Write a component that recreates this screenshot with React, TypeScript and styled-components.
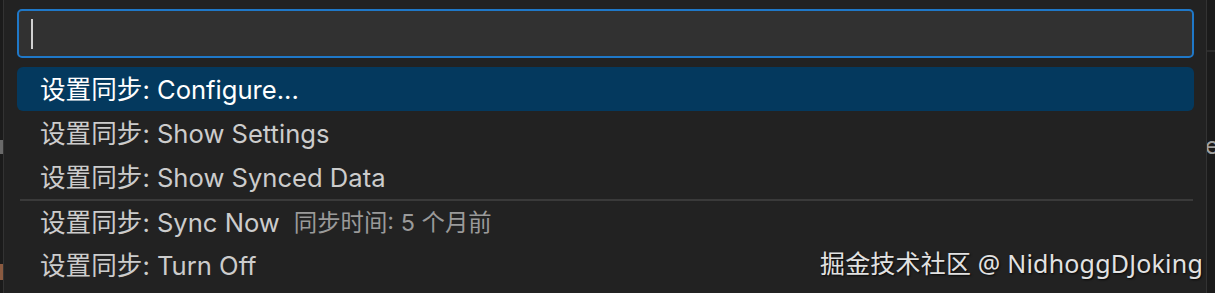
import React from 'react';
import styled, { createGlobalStyle } from 'styled-components';

const GlobalStyle = createGlobalStyle`
  html, body {
    margin: 0;
    padding: 0;
    background: #181818;
    overflow: hidden;
  }
  body {
    font-family: Inter, "Noto Sans CJK SC", sans-serif;
  }
`;

interface PickItem {
  label: string;
  description?: string;
  separator?: boolean;
}

const items: PickItem[] = [
  { label: '设置同步: Configure...' },
  { label: '设置同步: Show Settings' },
  { label: '设置同步: Show Synced Data' },
  { label: '设置同步: Sync Now', description: '同步时间: 5 个月前', separator: true },
  { label: '设置同步: Turn Off' },
];

const Screen = styled.div`
  position: relative;
  display: flex;
  width: 1215px;
  height: 293px;
  overflow: hidden;
  background: #181818;
`;

const EdgeStrip = styled.div<{ $w: number }>`
  width: ${(p) => p.$w}px;
  flex-shrink: 0;
  display: flex;
  flex-direction: column;
  overflow: hidden;
  background: #1b1b1b;
`;

const ScrollMark = styled.div`
  margin-top: 140px;
  width: 3px;
  height: 14px;
  background: #6a6a6a;
`;

const OrangeMark = styled.div`
  margin-top: 110px;
  width: 3px;
  height: 16px;
  background: #8a5a40;
`;

const RightLine = styled.div`
  margin-top: 50px;
  height: 2px;
  background: #2c2c2c;
`;

const PeekChar = styled.div`
  margin-top: 84px;
  margin-left: -2px;
  font-size: 24px;
  line-height: 20px;
  color: #a0a0a0;
`;

const Panel = styled.div`
  flex: 1;
  display: flex;
  flex-direction: column;
  gap: 9px;
  padding: 9px 12px 0 13px;
  background: #222222;
  border-left: 1px solid #333333;
  border-right: 1px solid #333333;
`;

const InputBox = styled.div`
  height: 45px;
  display: flex;
  align-items: center;
  padding-left: 12px;
  background: #313131;
  border: 2px solid #1f78c8;
  border-radius: 5px;
`;

const Caret = styled.div`
  width: 2px;
  height: 30px;
  background: #d0d0d0;
`;

const List = styled.div`
  display: flex;
  flex-direction: column;
`;

const Row = styled.div<{ $selected?: boolean; $separator?: boolean }>`
  height: 44px;
  box-sizing: border-box;
  display: flex;
  align-items: center;
  gap: 14px;
  padding: 0 0 3px 23px;
  border-radius: 6px;
  background: ${(p) => (p.$selected ? '#04395e' : 'transparent')};
  color: ${(p) => (p.$selected ? '#ffffff' : '#cccccc')};
  font-size: 25.6px;
  white-space: nowrap;
  ${(p) =>
    p.$separator
      ? 'border-top: 2px solid #3a3a3a; border-radius: 0; margin: 0 1px 0 3px; padding-left: 20px;'
      : ''}
`;

const Description = styled.span`
  font-size: 23.4px;
  color: #9a9a9a;
`;

const Watermark = styled.div`
  position: absolute;
  right: 12px;
  bottom: 13px;
  font-size: 25px;
  font-family: "Noto Sans", "Noto Sans CJK SC", sans-serif;
  color: #e2e2e2;
  text-shadow: 1px 1px 2px rgba(0, 0, 0, 0.8);
  letter-spacing: 0.2px;
`;

const App: React.FC = () => {
  return (
    <>
      <GlobalStyle />
      <Screen>
        <EdgeStrip $w={3}>
          <ScrollMark />
          <OrangeMark />
        </EdgeStrip>
        <Panel>
          <InputBox>
            <Caret />
          </InputBox>
          <List>
            {items.map((item, i) => (
              <Row key={item.label} $selected={i === 0} $separator={item.separator}>
                <span>{item.label}</span>
                {item.description && <Description>{item.description}</Description>}
              </Row>
            ))}
          </List>
        </Panel>
        <EdgeStrip $w={8}>
          <RightLine />
          <PeekChar>e</PeekChar>
        </EdgeStrip>
        <Watermark>掘金技术社区 @ NidhoggDJoking</Watermark>
      </Screen>
    </>
  );
};

export default App;
